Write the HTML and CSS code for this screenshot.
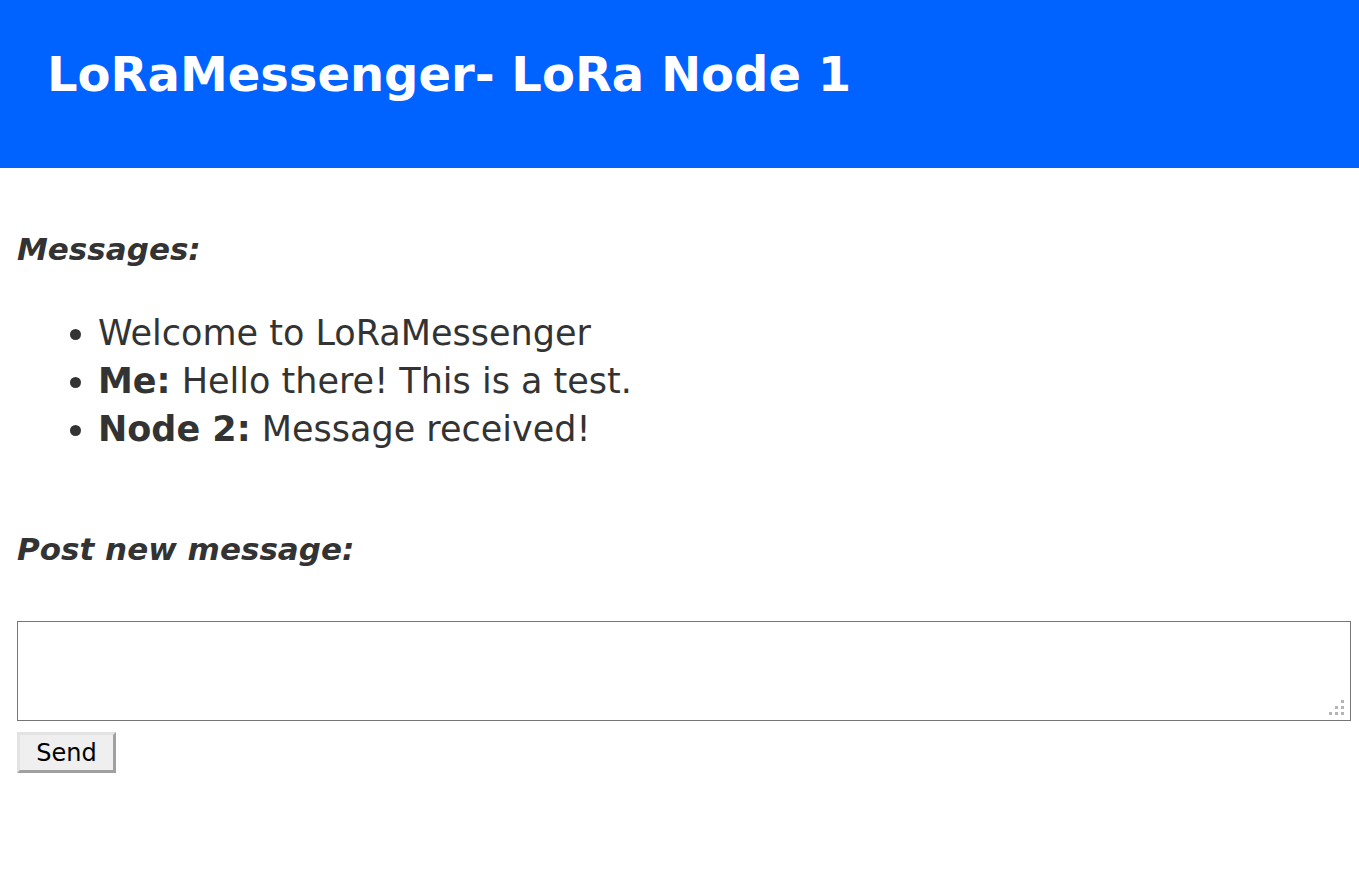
FILE: index.html
```html
<!DOCTYPE html>
<html>
<head>
<meta charset="utf-8">
<title>LoRaMessenger</title>
<link rel="stylesheet" href="styles.css">
</head>
<body>
<header class="topbar">
  <h1 class="title">LoRaMessenger- LoRa Node 1</h1>
</header>
<main class="content">
  <h3 class="section-title">Messages:</h3>
  <ul class="messages">
    <li>Welcome to LoRaMessenger</li>
    <li><b>Me:</b> Hello there! This is a test.</li>
    <li><b>Node 2:</b> Message received!</li>
  </ul>
  <h3 class="section-title post-title">Post new message:</h3>
  <form class="post-form">
    <div class="input-wrap">
      <textarea class="msg-input"></textarea>
      <span class="grip">
        <i class="dot d1"></i>
        <i class="dot d2"></i><i class="dot d3"></i>
        <i class="dot d4"></i><i class="dot d5"></i><i class="dot d6"></i>
      </span>
    </div>
    <button type="button" class="send-btn">Send</button>
  </form>
</main>
</body>
</html>
```
FILE: styles.css
```css
html, body {
  margin: 0;
  padding: 0;
  background: #fff;
}
body {
  font-family: "DejaVu Sans", sans-serif;
  color: #333;
}
.topbar {
  background: #0062ff;
  height: 168px;
  box-sizing: border-box;
  padding: 41px 47px 0;
}
.title {
  margin: 0;
  color: #fff;
  font-size: 48px;
  font-weight: bold;
  line-height: 66px;
}
.content {
  padding: 0 8px 0 17px;
}
.section-title {
  margin: 0;
  font-size: 31px;
  font-style: italic;
  font-weight: bold;
  line-height: 40px;
  padding-top: 61px;
}
.messages {
  margin: 40px 0 0;
  padding-left: 81px;
  font-size: 35px;
  line-height: 48px;
}
.messages b {
  font-weight: bold;
}
.post-title {
  padding-top: 76px;
}
.post-form {
  margin-top: 52px;
}
.input-wrap {
  position: relative;
  width: 1334px;
}
.msg-input {
  display: block;
  box-sizing: border-box;
  width: 1334px;
  height: 100px;
  margin: 0;
  border: 1px solid #767676;
  font-size: 16px;
  resize: none;
}
.grip {
  position: absolute;
  right: 7px;
  bottom: 6px;
  width: 15px;
  height: 15px;
}
.dot {
  position: absolute;
  width: 3px;
  height: 3px;
  background: #b4b4b4;
}
.d1 { right: 0; top: 0; }
.d2 { right: 6px; top: 6px; }
.d3 { right: 0; top: 6px; }
.d4 { right: 12px; top: 12px; }
.d5 { right: 6px; top: 12px; }
.d6 { right: 0; top: 12px; }
.send-btn {
  display: block;
  margin-top: 11px;
  width: 99px;
  height: 41px;
  font-family: "DejaVu Sans", sans-serif;
  font-size: 24px;
  color: #000;
  background: #efefef;
  border: 3px solid #a0a0a0;
  border-top-color: #e3e3e3;
  border-left-color: #e3e3e3;
  padding: 0;
}
```
